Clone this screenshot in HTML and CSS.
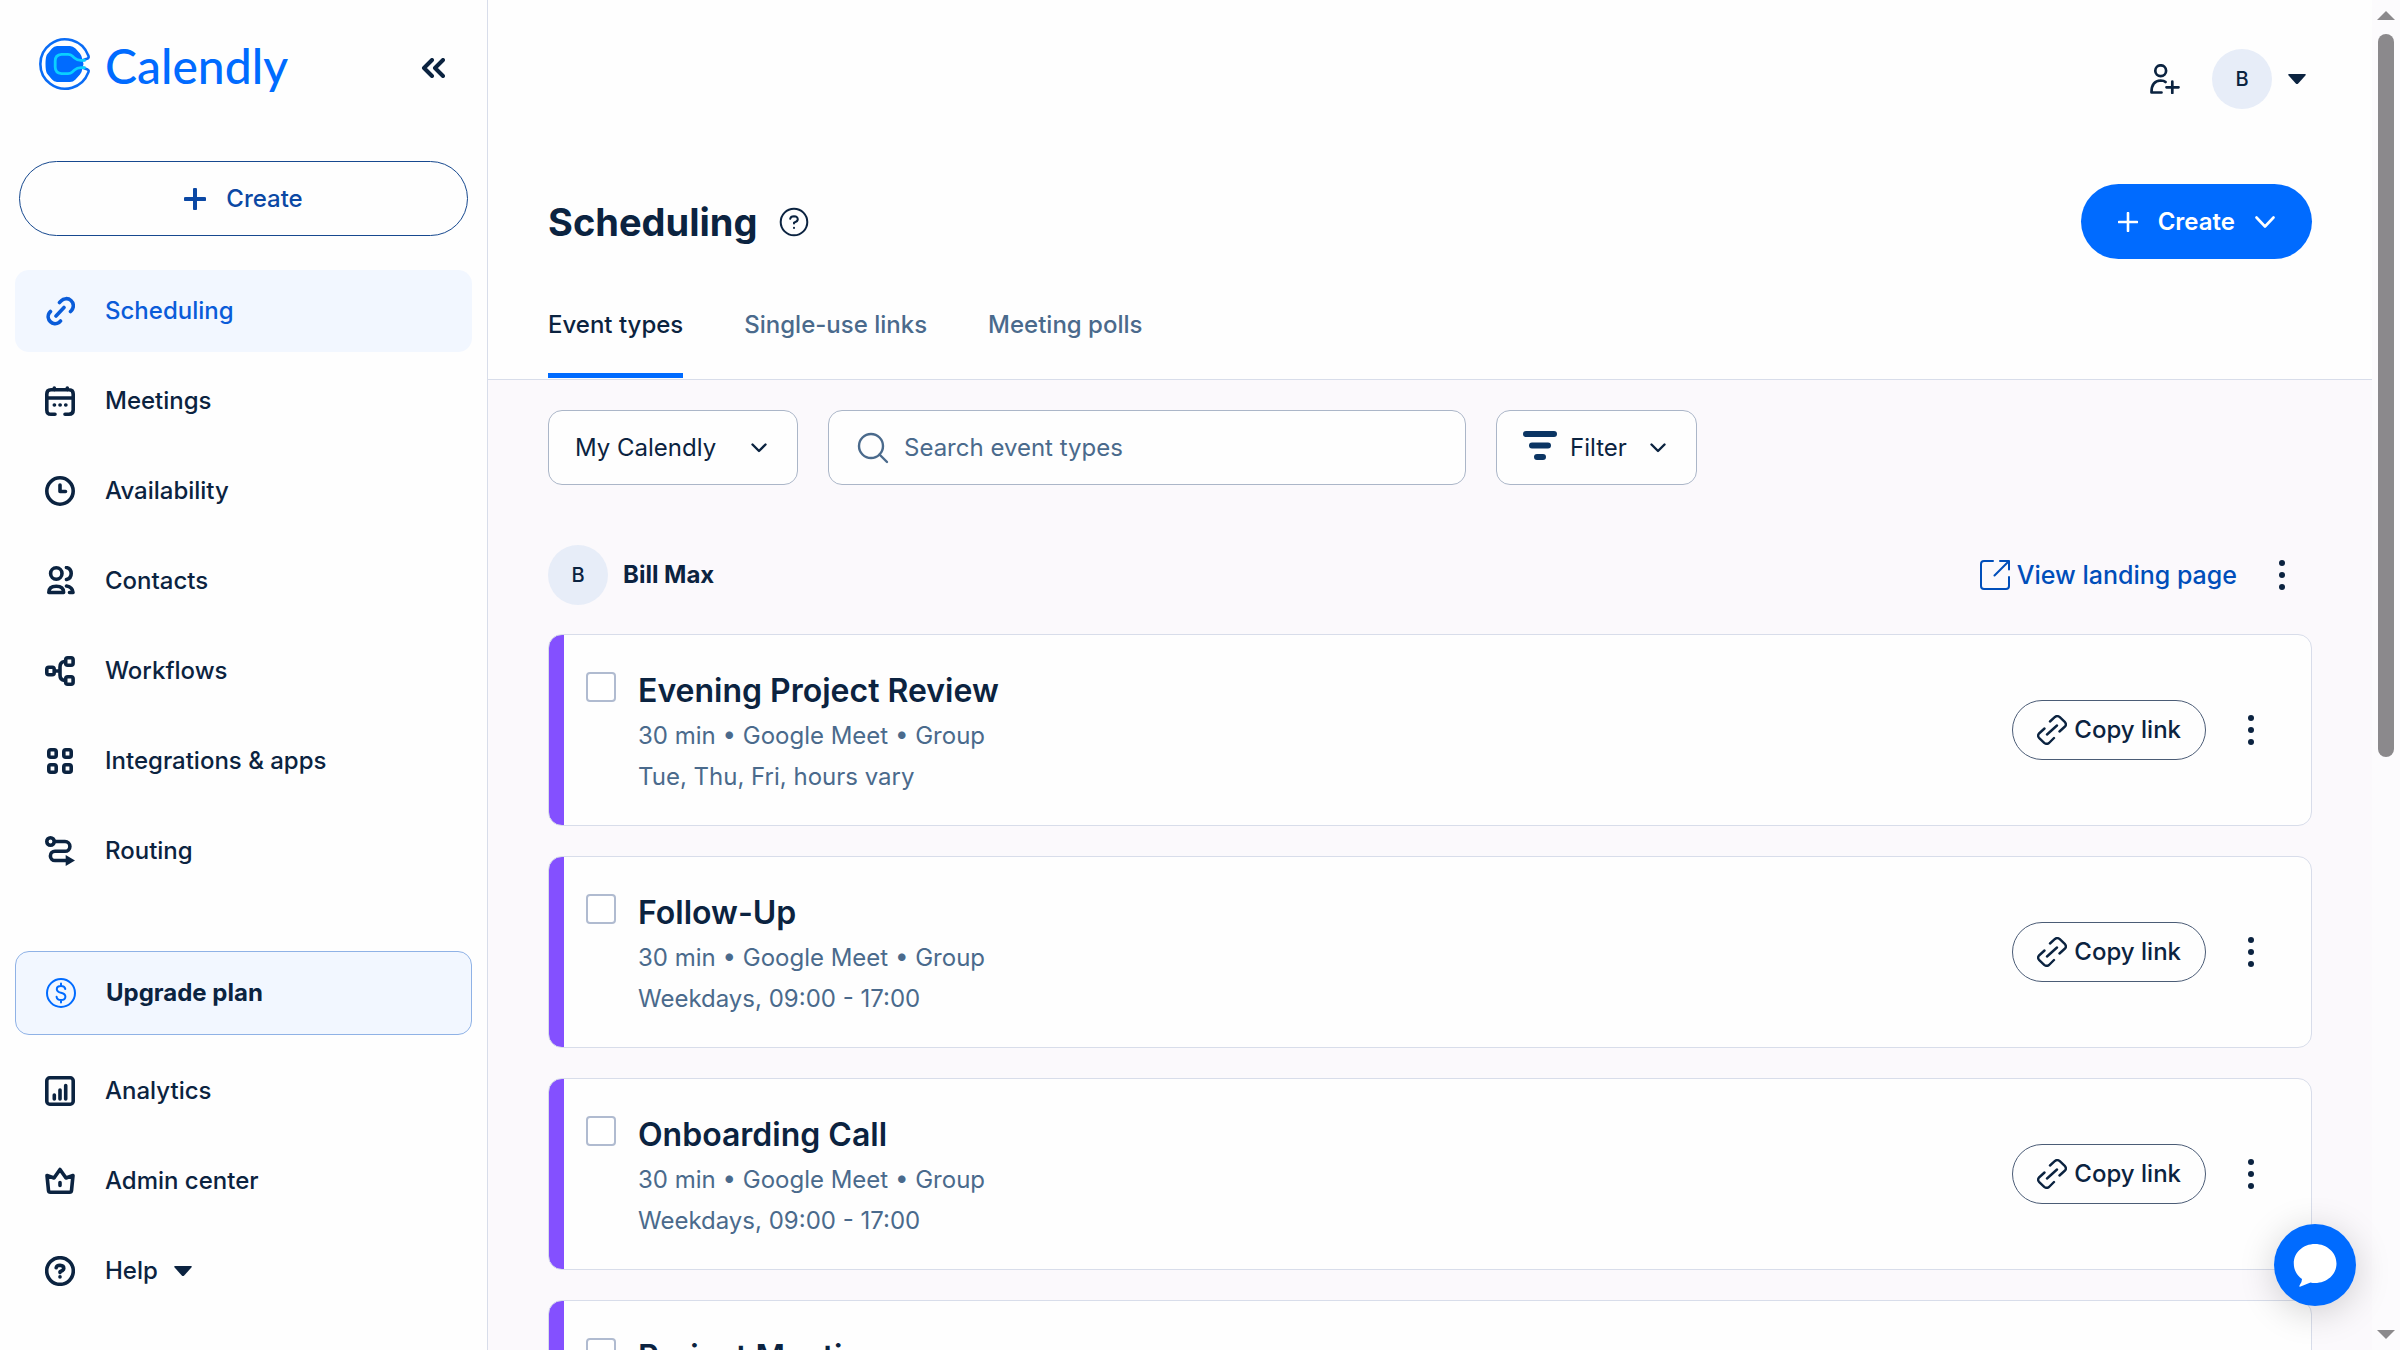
FILE: index.html
```html
<!DOCTYPE html>
<html lang="en">
<head>
<meta charset="utf-8">
<meta name="viewport" content="width=device-width, initial-scale=1">
<title>Scheduling - Calendly</title>
<link rel="stylesheet" href="styles.css">
</head>
<body>
<svg class="sprite" aria-hidden="true">
  <symbol id="kebab" viewBox="0 0 6 30"><circle cx="3" cy="3" r="3"/><circle cx="3" cy="15" r="3"/><circle cx="3" cy="27" r="3"/></symbol>
  <symbol id="chain" viewBox="0 0 30 30"><path d="M13 6.500 18 1.800Q20.600 0 23 2.200L28 7.200Q30 9.600 28 12L22 14.500M22 14.500 28 12" stroke="none"/><path d="M13 6.500 18 1.900Q20.500 .2 22.800 2.200L28 7.200Q29.800 9.600 28 11.500L22.500 16.500M7.500 13.500 2 18.500Q.2 20.600 2 22.800L7.200 27.800Q9.500 29.800 12 28L17 23M10 19.500 20 10.500"/></symbol>
  <symbol id="caret" viewBox="0 0 18 10"><path d="M1 0H17Q18.400 .4 17.400 1.600L10.200 9.400Q9 10.500 7.800 9.400L.6 1.600Q-.4 .4 1 0Z"/></symbol>
  <symbol id="question" viewBox="0 0 30 30"><circle cx="15" cy="15" r="13.300"/><path d="M11.200 11.800Q11.600 9.300 15 9.300 18.800 9.500 18.800 12.400 18.700 14.400 15 15.700V16.600"/><path d="M15 20.800V21"/></symbol>
</svg>
<div class="app">
  <aside class="sidebar">
    <div class="brand-row">
      <a class="brand" href="#">
        <svg class="brand-mark" viewBox="0 0 52 52" aria-hidden="true">
          <path class="mark-blob" d="M19 8H32Q35 8 37.500 10.500L42 15.500Q44 18 44.500 22L45.500 26 44.500 30Q44 34 42 36.500L37.500 41.500Q35 44 32 44H19Q16 43.800 14 41.500L9 35.500Q7.500 33 7.500 26T9 16.500L14 10.500Q16 8.200 19 8Z"/>
          <path class="mark-ring" d="M44 22.500 49 20.800Q51.500 19.800 50.200 17.400A24.700 24.700 0 1 0 50.200 34.600Q51.500 32.200 49 31.200L44 29.500"/>
          <path class="mark-core" d="M47.500 22.300H43Q39 22.200 36.500 20L34 17.800Q32.500 16.400 30 16.400H23.500Q17.200 17 17.200 23V29Q17.200 35 23.500 35.600H30Q32.500 35.600 34 34.200L36.500 32Q39 29.800 43 29.700H47.500"/>
        </svg>
        <span class="brand-name">Calendly</span>
      </a>
      <button class="icon-button collapse" aria-label="Collapse menu">
        <svg width="24" height="20" viewBox="0 0 24 20"><path d="M11 2 3 10 11 18M22 2 14 10 22 18"/></svg>
      </button>
    </div>
    <button class="create-outline">
      <svg width="22" height="22" viewBox="0 0 22 22"><path d="M11 1.500V20.500M1.500 11H20.500"/></svg>Create
    </button>
    <nav class="nav">
      <a class="nav-item active" href="#"><svg viewBox="0 0 30 30"><path d="M14.500 6.500 16 5A7 7 0 0 1 26.500 14.500L25.500 15.500M5.500 15.500 4.200 17A7 7 0 0 0 14 26.500L15.500 25M11 20 19 11.500"/></svg>Scheduling</a>
      <a class="nav-item" href="#"><svg viewBox="0 0 30 30"><path d="M10 28.200H6Q1.800 28.200 1.800 24V8Q1.800 3.800 6 3.800H24Q28.200 3.800 28.200 8V24Q28.200 28.200 24 28.200H20M2 12H28M9.300 2V4M22.300 2V4M9.300 19H9.500M15 19H15.200M20.700 19H20.900"/></svg>Meetings</a>
      <a class="nav-item" href="#"><svg viewBox="0 0 30 30"><circle cx="15" cy="15" r="13.200"/><path d="M15 9V15.500H20.500"/></svg>Availability</a>
      <a class="nav-item" href="#"><svg viewBox="0 1.500 30 30"><circle cx="11.300" cy="9" r="5.700"/><path d="M21.500 3Q26.200 4.200 26.200 9T21.500 15M3.800 28Q3.800 21.800 11.300 21.800T18.600 28ZM21.500 21.500Q27.500 22.500 28 28H24.500"/></svg>Contacts</a>
      <a class="nav-item" href="#"><svg viewBox="0 0 30 30"><rect x="1.800" y="11.300" width="7.400" height="7.400" rx="2"/><rect x="20.700" y="1.800" width="7.400" height="7.400" rx="2"/><rect x="20.700" y="20.800" width="7.400" height="7.400" rx="2"/><path d="M10 15H15M19.500 5.500Q15 6 15 11V19Q15 24 19.500 24.500"/></svg>Workflows</a>
      <a class="nav-item" href="#"><svg viewBox="0 0 30 30"><rect x="3.800" y="3.800" width="7.400" height="7.400" rx="2"/><rect x="18.800" y="3.800" width="7.400" height="7.400" rx="2"/><rect x="3.800" y="18.800" width="7.400" height="7.400" rx="2"/><rect x="18.800" y="18.800" width="7.400" height="7.400" rx="2"/></svg>Integrations &amp; apps</a>
      <a class="nav-item" href="#"><svg viewBox="0 0 30 30"><circle cx="5.500" cy="5.500" r="3.700"/><path d="M10 5.500H20A4.900 4.900 0 0 1 20 15.300H10A4.600 4.600 0 0 0 10 24.500H22"/><path class="solid" d="M20.700 19 30 24.500 20.700 30Z"/></svg>Routing</a>
    </nav>
    <nav class="nav nav-lower">
      <a class="nav-item upgrade" href="#"><svg class="thin" viewBox="0 0 30 30"><circle cx="15" cy="15" r="14"/><path d="M15 5.500V8M15 22V24.500M19.300 11Q18.800 8 15 8 10.800 8 10.800 11.200 10.900 13.800 15 14.800 19.400 15.900 19.400 18.700 19.300 22 15 22 11 22 10.600 18.800"/></svg>Upgrade plan</a>
      <a class="nav-item" href="#"><svg viewBox="0 0 30 30"><rect x="1.800" y="1.800" width="26.400" height="26.400" rx="3"/><path d="M9.300 19V23M15 14V23M20.700 9.500V23"/></svg>Analytics</a>
      <a class="nav-item" href="#"><svg viewBox="0 0 30 30"><path d="M2 9.500 9 12 15 3.500 21 12 28 9.500 26.500 24.500Q26.300 26.200 24.500 26.200H5.500Q3.700 26.200 3.500 24.500ZM15 16.500V19.500"/></svg>Admin center</a>
      <a class="nav-item" href="#"><svg><use href="#question"/></svg>Help<svg class="caret"><use href="#caret"/></svg></a>
    </nav>
  </aside>

  <main class="main">
    <header class="header">
      <div class="topbar">
        <button class="icon-button invite" aria-label="Invite user"><svg width="30" height="30" viewBox="0 0 30 30"><circle cx="10.700" cy="6.700" r="5.400"/><path d="M11.500 28.500H1.500Q1.300 17 10.700 16.500 14 16.500 15.500 18M22.300 17.500V29M16.500 23.300H28.500"/></svg></button>
        <button class="icon-button account" aria-label="Account"><span class="avatar">B</span><svg class="caret"><use href="#caret"/></svg></button>
      </div>
      <div class="title-row">
        <h1>Scheduling</h1>
        <button class="icon-button help" aria-label="About scheduling"><svg width="30" height="30"><use href="#question"/></svg></button>
        <button class="create-solid">
          <svg width="20" height="20" viewBox="0 0 20 20"><path d="M10 1V19M1 10H19"/></svg>Create<svg width="20" height="12" viewBox="0 0 20 12"><path d="M1.500 1.500 10 10.500 18.500 1.500"/></svg>
        </button>
      </div>
      <nav class="tabs">
        <a class="tab current" href="#">Event types</a>
        <a class="tab" href="#">Single-use links</a>
        <a class="tab" href="#">Meeting polls</a>
      </nav>
    </header>
    <section class="content">
      <div class="filters">
        <label class="field select">
          <select aria-label="Calendar owner"><option>My Calendly</option></select>
          <svg width="16" height="10" viewBox="0 0 16 10"><path d="M1.500 1.500 8 8 14.500 1.500"/></svg>
        </label>
        <label class="field search">
          <svg width="32" height="32" viewBox="0 0 32 32"><circle cx="14" cy="14" r="12"/><path d="M22.500 22.500 30 30"/></svg>
          <input type="search" placeholder="Search event types" aria-label="Search event types">
        </label>
        <button class="field filter">
          <svg width="34" height="34" viewBox="0 0 34 34"><path class="bars" d="M3 3H31M9 14.500H25M14 26H20"/></svg>
          <span>Filter</span>
          <svg width="16" height="10" viewBox="0 0 16 10"><path d="M1.500 1.500 8 8 14.500 1.500"/></svg>
        </button>
      </div>
      <div class="owner">
        <span class="avatar">B</span>
        <h2>Bill Max</h2>
        <a class="landing" href="#"><svg width="30" height="30" viewBox="0 0 30 30"><path d="M13 1H4Q1 1 1 4V26Q1 29 4 29H26Q29 29 29 26V17M14.500 15.500 29 1M20 1H29V9.500"/></svg>View landing page</a>
        <button class="icon-button more" aria-label="More options"><svg><use href="#kebab"/></svg></button>
      </div>
      <ul class="cards">
        <li class="card">
          <input type="checkbox" id="event-1">
          <div class="info"><h3><label for="event-1">Evening Project Review</label></h3><p>30 min • Google Meet • Group</p><p>Tue, Thu, Fri, hours vary</p></div>
          <button class="copy"><svg width="30" height="30"><use href="#chain"/></svg>Copy link</button>
          <button class="icon-button more" aria-label="More options"><svg><use href="#kebab"/></svg></button>
        </li>
        <li class="card">
          <input type="checkbox" id="event-2">
          <div class="info"><h3><label for="event-2">Follow-Up</label></h3><p>30 min • Google Meet • Group</p><p>Weekdays, 09:00 - 17:00</p></div>
          <button class="copy"><svg width="30" height="30"><use href="#chain"/></svg>Copy link</button>
          <button class="icon-button more" aria-label="More options"><svg><use href="#kebab"/></svg></button>
        </li>
        <li class="card">
          <input type="checkbox" id="event-3">
          <div class="info"><h3><label for="event-3">Onboarding Call</label></h3><p>30 min • Google Meet • Group</p><p>Weekdays, 09:00 - 17:00</p></div>
          <button class="copy"><svg width="30" height="30"><use href="#chain"/></svg>Copy link</button>
          <button class="icon-button more" aria-label="More options"><svg><use href="#kebab"/></svg></button>
        </li>
        <li class="card">
          <input type="checkbox" id="event-4">
          <div class="info"><h3><label for="event-4">Project Meeting</label></h3></div>
        </li>
      </ul>
    </section>
  </main>

  <div class="scrollbar" aria-hidden="true">
    <svg width="18" height="9" viewBox="0 0 18 9"><path d="M9 0 18 9H0Z"/></svg>
    <div class="track"><div class="thumb"></div></div>
    <svg width="18" height="9" viewBox="0 0 18 9"><path d="M0 0H18L9 9Z"/></svg>
  </div>
</div>
<button class="chat" aria-label="Open chat">
  <svg width="82" height="82" viewBox="0 0 82 82"><path d="M41 20C53 20 62.500 28.500 62.500 39.500S53 59 41 59Q38.500 59 36.500 58.500L26 62.800Q24.800 62.800 25.500 61.500 28 58.500 28 55C22.500 51 19.800 45.500 19.800 39.500 19.800 28.500 29 20 41 20Z"/></svg>
</button>
</body>
</html>
```
FILE: styles.css
```css
* { box-sizing: border-box; }

:root {
  --ink: #0b2340;
  --muted: #4a6a8c;
  --blue: #006bff;
  --link: #004eba;
  --line: #d8ddea;
  --field-line: #abb6c8;
}

body {
  margin: 0;
  color: var(--ink);
  background: #fff;
  font: 500 24px/32px Inter, "Liberation Sans", sans-serif;
}

h1, h2, h3, p, ul { margin: 0; padding: 0; }
a { color: inherit; text-decoration: none; }
button, input, select { font: inherit; color: inherit; }
button { display: flex; align-items: center; padding: 0; border: 0; background: none; cursor: pointer; }
svg { flex: none; fill: none; stroke: currentColor; stroke-width: 2; stroke-linecap: round; stroke-linejoin: round; }
.sprite { display: none; }

.app { display: flex; height: 100vh; overflow: hidden; }

/* Sidebar */
.sidebar {
  flex: none;
  width: 488px;
  padding: 36px 15px 0;
  background: #fefefe;
  border-right: 1px solid var(--line);
}
.brand-row { display: flex; align-items: flex-start; justify-content: space-between; height: 125px; padding: 0 27px 0 23px; }
.brand { display: flex; gap: 15px; color: var(--blue); }
.brand-mark { width: 52px; height: 56px; }
.mark-blob { fill: var(--blue); stroke: none; }
.mark-ring { stroke: #0a6cf5; stroke-width: 2.6; }
.mark-core { stroke: #0ad0ff; stroke-width: 2.8; stroke-linecap: butt; }
.brand-name { font: 500 48px/60px Lato, "Liberation Sans", sans-serif; }
.collapse { height: 64px; }
.collapse svg { stroke-width: 4; }
.create-outline {
  justify-content: center;
  gap: 20px;
  width: calc(100% - 8px);
  height: 75px;
  margin: 0 4px;
  border: 1px solid #17498f;
  border-radius: 38px;
  color: #0b48a4;
}
.create-outline svg { stroke-width: 4; }
.nav { display: flex; flex-direction: column; gap: 8px; margin-top: 34px; }
.nav-lower { margin-top: 59px; }
.nav-item { display: flex; align-items: center; height: 82px; padding-left: 30px; border-radius: 14px; }
.nav-item svg { width: 30px; height: 30px; margin-right: 30px; stroke-width: 3.6; }
.nav-item .thin { stroke: var(--blue); stroke-width: 2; }
.nav-item .solid { fill: currentColor; stroke: none; }
.nav-item.active { color: #0a5cd9; background: #f2f7ff; }
.nav-item.upgrade { height: 84px; margin-bottom: 7px; border: 1px solid #8fb2e6; background: #f2f7ff; font-weight: 700; }
.caret, .nav-item .caret { width: 18px; height: 10px; margin: 0; fill: currentColor; stroke: none; }
.nav-item .caret { margin-left: 16px; }

/* Header */
.main { flex: 1; min-width: 0; display: flex; flex-direction: column; background: #fbf9fc; }
.header { padding: 49px 60px 0; background: #fefefe; border-bottom: 1px solid var(--line); }
.topbar { display: flex; justify-content: flex-end; align-items: center; gap: 32px; height: 60px; }
.invite svg { stroke-width: 2.7; }
.account { gap: 16px; padding-right: 6px; }
.avatar {
  display: flex;
  flex: none;
  align-items: center;
  justify-content: center;
  width: 60px;
  height: 60px;
  border-radius: 50%;
  background: #e7edf8;
  font-size: 20px;
}
.title-row { display: flex; align-items: center; margin-top: 75px; }
h1 { font-size: 38px; line-height: 48px; font-weight: 700; }
.help { margin-left: 22px; }
.create-solid {
  gap: 20px;
  height: 75px;
  margin-left: auto;
  padding: 0 37px;
  border-radius: 38px;
  color: #fff;
  background: var(--blue);
  font-weight: 600;
}
.create-solid svg { stroke-width: 2.6; }
.tabs { display: flex; gap: 61px; margin-top: 39px; }
.tab { height: 81px; padding-top: 11px; color: var(--muted); }
.tab.current { height: 80px; margin-bottom: 1px; color: var(--ink); border-bottom: 5px solid var(--blue); }

/* Filters */
.content { padding: 30px 60px 0; }
.filters { display: flex; gap: 30px; }
.field {
  height: 75px;
  border: 1px solid var(--field-line);
  border-radius: 14px;
  background: #fefefe;
  font-weight: 400;
}
.select { display: grid; align-items: center; width: 250px; }
.select select { grid-area: 1 / 1; height: 73px; padding: 0 26px; border: 0; appearance: none; background: none; outline: 0; }
.select svg { grid-area: 1 / 1; justify-self: end; margin-right: 30px; pointer-events: none; }
.search { display: flex; align-items: center; flex: 0 1 638px; gap: 15px; padding: 0 28px; color: var(--muted); }
.search input { flex: 1; min-width: 0; padding: 0; border: 0; background: none; outline: 0; }
.search input::placeholder { color: var(--muted); opacity: 1; }
.search svg, .select svg, .filter svg { stroke-width: 2.4; }
.filter { padding: 0 30px 0 26px; }
.filter span { margin: 0 23px 0 13px; }
.filter .bars { stroke: #0b3563; stroke-width: 6; }

/* Owner */
.owner { display: flex; align-items: center; margin-top: 60px; padding-right: 26px; }
h2 { margin-left: 15px; font-size: 24px; line-height: 32px; font-weight: 700; }
.landing { display: flex; align-items: center; gap: 7px; margin-left: auto; color: var(--link); font-size: 25px; }
.more { margin-left: 41px; }
.more svg { width: 8px; height: 30px; fill: currentColor; stroke: none; }

/* Event cards */
.cards { display: flex; flex-direction: column; gap: 30px; margin-top: 29px; list-style: none; }
.card {
  display: flex;
  align-items: center;
  height: 192px;
  padding-right: 56px;
  overflow: hidden;
  border: 1px solid var(--line);
  border-radius: 14px;
  background: linear-gradient(to right, #8450ff 15px, #fefefe 15px);
}
.card input {
  flex: none;
  align-self: flex-start;
  width: 30px;
  height: 30px;
  margin: 37px 22px 0 37px;
  appearance: none;
  border: 2px solid #b0bbd0;
  border-radius: 4px;
  background: #fff;
}
.info { align-self: flex-start; flex: 1; padding-top: 34px; }
h3 { font-size: 32px; line-height: 44px; font-weight: 600; margin-bottom: 2px; }
.info p { color: var(--muted); font-weight: 400; line-height: 41px; }
.copy { gap: 7px; height: 60px; padding: 0 24px; border: 1px solid #4b5c76; border-radius: 30px; }
.copy svg { stroke-width: 2.4; }

/* Scrollbar */
.scrollbar {
  display: flex;
  flex: none;
  flex-direction: column;
  align-items: center;
  width: 28px;
  padding: 11px 0;
  background: #fcfbfd;
}
.scrollbar svg { fill: #8b898c; stroke: none; }
.track { display: grid; flex: 1; grid-template-rows: 22fr 17fr; width: 16px; padding: 14px 0; }
.thumb { border-radius: 8px; background: #8b898c; }

.chat {
  position: fixed;
  right: 44px;
  bottom: 44px;
  border-radius: 50%;
  background: var(--blue);
  box-shadow: 0 6px 36px rgb(0 0 0 / 18%);
}
.chat svg { fill: #fff; stroke: none; }
```
